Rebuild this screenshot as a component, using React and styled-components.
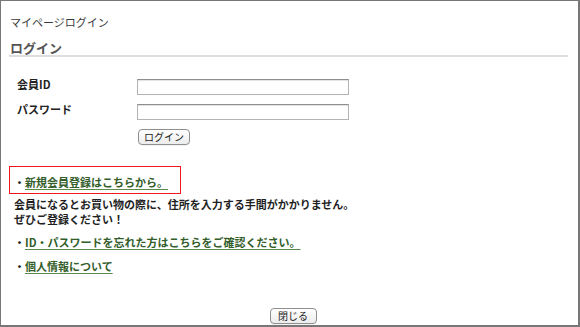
import React from "react";
import styled, { createGlobalStyle } from "styled-components";

const GlobalStyle = createGlobalStyle`
  html, body {
    margin: 0;
    padding: 0;
    background: #ffffff;
  }
  body {
    font-family: "Noto Sans CJK JP", "Liberation Sans", sans-serif;
    color: #222;
  }
  * { box-sizing: border-box; }
`;

const Frame = styled.div`
  width: 580px;
  height: 327px;
  border: 1px solid #777;
  border-right-width: 2px;
  border-bottom-width: 2px;
  display: flex;
  flex-direction: column;
  overflow: hidden;
`;

const PageTitle = styled.div`
  margin: 14px 0 0 9px;
  font-size: 11px;
  line-height: 15px;
  color: #3a3a3a;
`;

const Heading = styled.h1`
  margin: 10px 10px 0 8px;
  padding: 0 0 0 1px;
  font-size: 13px;
  line-height: 15px;
  font-weight: bold;
  color: #555;
  border-bottom: 2px solid #dedede;
`;

const FormGrid = styled.div`
  margin: 22px 0 0 16px;
  display: grid;
  grid-template-columns: 120px 212px;
  row-gap: 9px;
  align-items: start;
`;

const Label = styled.label`
  font-size: 11px;
  font-weight: bold;
  line-height: 11px;
  color: #222;
`;

const TextInput = styled.input`
  width: 212px;
  height: 16px;
  margin: 0;
  padding: 0 3px;
  border: 1px solid #b4b4b4;
  border-top-color: #8e8e8e;
  box-shadow: inset 0 1px 1px rgba(0, 0, 0, 0.12);
  background: #fff;
  font-size: 11px;
  outline: none;
`;

const Button = styled.button`
  height: 16px;
  width: ${(p) => p.$w}px;
  margin: 0 0 0 ${(p) => p.$ml || 0}px;
  padding: 0;
  font-family: "Noto Sans CJK JP", sans-serif;
  font-size: 10px;
  line-height: 14px;
  color: #222;
  border: 1px solid #8f8f8f;
  border-radius: 4px;
  background: linear-gradient(#ffffff, #ececec);
  box-shadow: 0 1px 0 rgba(0, 0, 0, 0.05);
`;

const Spacer = styled.div``;

const NewBox = styled.div`
  margin: 21px 0 0 8px;
  width: 172px;
  height: 28px;
  border: 1px solid #f01818;
  padding: 8px 0 0 4px;
`;

const Line = styled.div`
  font-size: 11px;
  line-height: 15px;
  font-weight: bold;
  color: #1f1f1f;
  white-space: nowrap;
`;

const Para = styled.div`
  margin: ${(p) => p.$mt}px 0 0 13px;
`;

const Bullet = styled.span`
  display: inline-block;
  width: 11px;
`;

const Link = styled.a`
  color: #335d2a;
  text-decoration: underline;
  text-decoration-color: #5b8a4f;
  text-underline-offset: 2px;
  cursor: pointer;
`;

const Footer = styled.div`
  margin-top: auto;
  margin-bottom: 1px;
  display: flex;
  justify-content: center;
  padding-left: 7px;
`;

export default function App() {
  return (
    <>
      <GlobalStyle />
      <Frame>
        <PageTitle>マイページログイン</PageTitle>
        <Heading>ログイン</Heading>
        <FormGrid>
          <Label>会員ID</Label>
          <TextInput type="text" />
          <Label>パスワード</Label>
          <TextInput type="password" />
          <Spacer />
          <Button $w={52} $ml={1}>ログイン</Button>
        </FormGrid>
        <NewBox>
          <Line>
            <Bullet>・</Bullet>
            <Link>新規会員登録はこちらから。</Link>
          </Line>
        </NewBox>
        <Para $mt={3}>
          <Line>会員になるとお買い物の際に、住所を入力する手間がかかりません。</Line>
          <Line>ぜひご登録ください！</Line>
        </Para>
        <Para $mt={8}>
          <Line>
            <Bullet>・</Bullet>
            <Link>ID・パスワードを忘れた方はこちらをご確認ください。</Link>
          </Line>
        </Para>
        <Para $mt={9}>
          <Line>
            <Bullet>・</Bullet>
            <Link>個人情報について</Link>
          </Line>
        </Para>
        <Footer>
          <Button $w={47}>閉じる</Button>
        </Footer>
      </Frame>
    </>
  );
}
